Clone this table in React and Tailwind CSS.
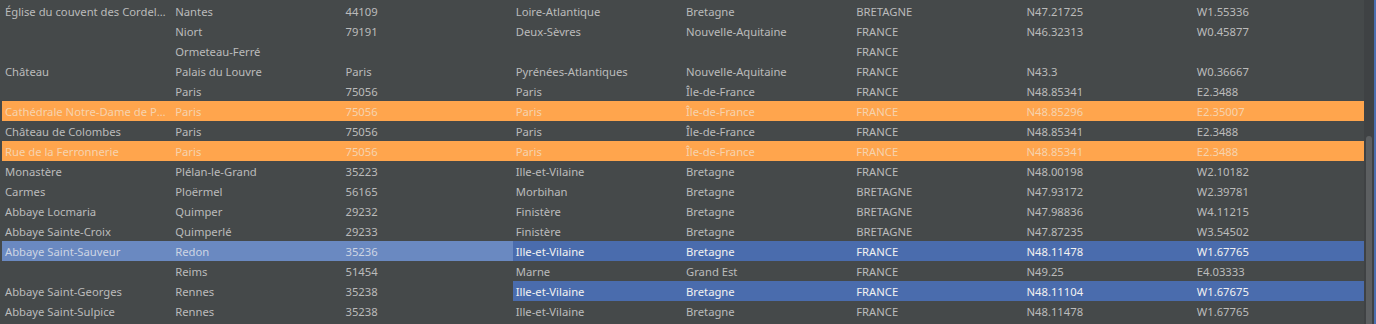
import React from "react";

const rows = [
  { c: ["Église du couvent des Cordeliers", "Nantes", "44109", "Loire-Atlantique", "Bretagne", "BRETAGNE", "N47.21725", "W1.55336"] },
  { c: ["", "Niort", "79191", "Deux-Sèvres", "Nouvelle-Aquitaine", "FRANCE", "N46.32313", "W0.45877"] },
  { c: ["", "Ormeteau-Ferré", "", "", "", "FRANCE", "", ""] },
  { c: ["Château", "Palais du Louvre", "Paris", "Pyrénées-Atlantiques", "Nouvelle-Aquitaine", "FRANCE", "N43.3", "W0.36667"] },
  { c: ["", "Paris", "75056", "Paris", "Île-de-France", "FRANCE", "N48.85341", "E2.3488"] },
  { c: ["Cathédrale Notre-Dame de Paris", "Paris", "75056", "Paris", "Île-de-France", "FRANCE", "N48.85296", "E2.35007"], mark: true },
  { c: ["Château de Colombes", "Paris", "75056", "Paris", "Île-de-France", "FRANCE", "N48.85341", "E2.3488"] },
  { c: ["Rue de la Ferronnerie", "Paris", "75056", "Paris", "Île-de-France", "FRANCE", "N48.85341", "E2.3488"], mark: true },
  { c: ["Monastère", "Plélan-le-Grand", "35223", "Ille-et-Vilaine", "Bretagne", "FRANCE", "N48.00198", "W2.10182"] },
  { c: ["Carmes", "Ploërmel", "56165", "Morbihan", "Bretagne", "BRETAGNE", "N47.93172", "W2.39781"] },
  { c: ["Abbaye Locmaria", "Quimper", "29232", "Finistère", "Bretagne", "BRETAGNE", "N47.98836", "W4.11215"] },
  { c: ["Abbaye Sainte-Croix", "Quimperlé", "29233", "Finistère", "Bretagne", "BRETAGNE", "N47.87235", "W3.54502"] },
  { c: ["Abbaye Saint-Sauveur", "Redon", "35236", "Ille-et-Vilaine", "Bretagne", "FRANCE", "N48.11478", "W1.67765"], soft: true, sel: true },
  { c: ["", "Reims", "51454", "Marne", "Grand Est", "FRANCE", "N49.25", "E4.03333"] },
  { c: ["Abbaye Saint-Georges", "Rennes", "35238", "Ille-et-Vilaine", "Bretagne", "FRANCE", "N48.11104", "W1.67675"], sel: true },
  { c: ["Abbaye Saint-Sulpice", "Rennes", "35238", "Ille-et-Vilaine", "Bretagne", "FRANCE", "N48.11478", "W1.67765"] },
];

// row highlight: orange = marked, soft blue = lead selection, blue = selected cells
function cellClass(row, i) {
  if (row.mark) return "bg-[#ffa54d] text-[#f6d3ad]";
  if (i < 3 && row.soft) return "bg-[#6a89c1] text-[#cdd5e4]";
  if (i >= 3 && row.sel) return "bg-[#4a6cad] text-[#f2f2f2]";
  return "text-[#bbbbbb]";
}

export default function App() {
  return (
    <div className="flex w-[1376px] h-[324px] overflow-hidden bg-[#45494a] font-['Noto_Sans',sans-serif] text-[11.25px]">
      <div className="flex-1 min-w-0 pl-[2px] pt-[1px]">
        {rows.map((row, r) => (
          <div key={r} className="grid grid-cols-[repeat(8,minmax(0,1fr))] h-[20px]">
            {row.c.map((v, i) => (
              <div key={i} className={"pl-[3px] pr-[4px] pt-[1px] leading-[19px] truncate " + cellClass(row, i)}>
                {v}
              </div>
            ))}
          </div>
        ))}
      </div>
      <div className="w-[10px] bg-[#3f4244] pt-[136px] flex justify-center">
        <div className="w-[6px] h-[220px] rounded-[3px] bg-[#5c5f61]" />
      </div>
      <div className="w-[2px] bg-[#4a6eaf]" />
    </div>
  );
}
